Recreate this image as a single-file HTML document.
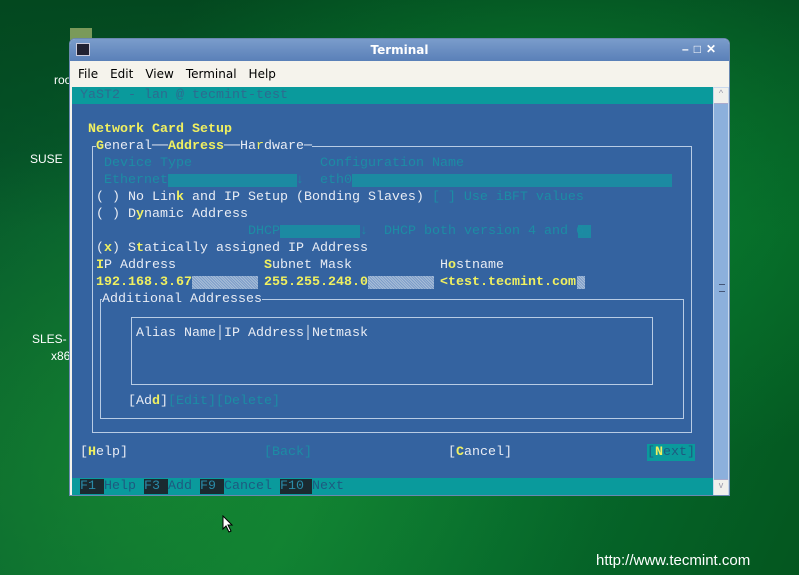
<!DOCTYPE html>
<html><head><meta charset="utf-8"><style>
*{margin:0;padding:0;box-sizing:border-box}
body{width:799px;height:575px;overflow:hidden;position:relative;font-family:"Liberation Sans",sans-serif;
background:linear-gradient(115deg,#05522a 0%,#0a6a30 30%,#0c7a32 50%,#066a2c 70%,#04561f 100%);}
.g1{position:absolute;left:0;top:0;width:799px;height:575px;background:radial-gradient(ellipse at 20% 80%,rgba(30,150,50,.5),rgba(0,0,0,0) 50%),radial-gradient(ellipse at 70% 30%,rgba(10,140,50,.6),rgba(0,0,0,0) 55%),linear-gradient(180deg,#03481f 0%,rgba(0,0,0,0) 40%)}
.dl{position:absolute;color:#fff;font-size:12px}
.win{position:absolute;left:69px;top:38px;width:661px;height:458px;background:#f5f3ec;border:1px solid #6a88b0;border-radius:6px 6px 0 0;overflow:hidden}
.title{position:absolute;left:0;top:0;width:100%;height:22px;background:linear-gradient(#7a9ccb,#5a80b8);color:#fff;font-weight:bold;font-size:12px;text-align:center;line-height:22px;font-family:"DejaVu Sans",sans-serif}
.menu{position:absolute;left:0;top:22px;height:26px;width:100%;font-size:12px;line-height:26px;color:#000;font-family:"DejaVu Sans",sans-serif}
.menu span{margin-left:8px;margin-right:4px}
.term{position:absolute;left:2px;top:48px;width:641px;height:409px;background:#3463a0;overflow:hidden;font-family:"Liberation Mono","DejaVu Sans Mono",monospace;font-size:13.33px;line-height:17px;color:#e8ecf4}
.in{position:absolute;left:8px;top:0;width:633px;height:409px}
.sb{position:absolute;left:643px;top:48px;width:16px;height:409px;background:#8cb0dc;border:1px solid #c8d8ec}
.t{position:absolute;white-space:pre}
.d{color:#1c8ca4}
.y{color:#f0f060;font-weight:bold}
.yy{color:#f0f060}
.f{position:absolute;background:repeating-linear-gradient(45deg,#a8bed8 0 1px,#7c9cc8 1px 2px)}
.fd{position:absolute;background:#1c8aa2}
.bx{position:absolute;border:1px solid #b8cce4}
</style></head><body>
<div class="g1"></div>
<div class="dl" style="left:54px;top:73px">roo</div>
<div class="dl" style="left:30px;top:152px">SUSE</div>
<div class="dl" style="left:32px;top:332px">SLES-</div>
<div class="dl" style="left:51px;top:349px">x86</div>
<div style="position:absolute;left:70px;top:28px;width:22px;height:12px;background:#7a9a5a"></div>
<div class="dl" style="left:596px;top:552px;font-size:15px">http://www.tecmint.com</div>
<svg style="position:absolute;left:222px;top:515px" width="12" height="18"><path d="M1 1L1 14L4 11L7 17L9 16L6 10L10 10Z" fill="#fff" stroke="#000"/></svg>
<div class="win">
<div class="title">Terminal</div>
<div style="position:absolute;left:6px;top:4px;width:14px;height:13px;background:#223;border:1px solid #ccd"></div>
<div style="position:absolute;right:8px;top:3px;color:#fff;font-size:12px;font-weight:bold;letter-spacing:5px">–□✕</div>
<div class="menu"><span>File</span><span>Edit</span><span>View</span><span>Terminal</span><span>Help</span></div>
<div class="term">
<div style="position:absolute;left:0;top:0;width:641px;height:17px;background:#0a9a9c"></div>
<div style="position:absolute;left:0;top:391px;width:641px;height:17px;background:#0a9a9c"></div>
<div class="in">
<div class="t" style="left:0;top:0;color:#2e6a90">YaST2 - lan @ tecmint-test</div>
<div class="t y" style="left:8px;top:34px">Network Card Setup</div>
<div class="bx" style="left:12px;top:59px;width:600px;height:287px"></div>
<div class="t" style="left:16px;top:51px;background:#3463a0"><span class="y">G</span>eneral──<span class="y">Address</span>──Ha<span class="yy">r</span>dware─</div>
<div class="t d" style="left:24px;top:68px">Device Type</div>
<div class="t d" style="left:240px;top:68px">Configuration Name</div>
<div class="fd" style="left:88px;top:87px;width:129px;height:13px"></div>
<div class="t d" style="left:24px;top:85px">Ethernet</div>
<div class="t d" style="left:216px;top:85px">↓</div>
<div class="fd" style="left:272px;top:87px;width:320px;height:13px"></div>
<div class="t d" style="left:240px;top:85px">eth0</div>
<div class="t" style="left:16px;top:102px">( ) No Lin<span class="y">k</span> and IP Setup (Bonding Slaves) <span class="d">[ ] Use iBFT values</span></div>
<div class="t" style="left:16px;top:119px">( ) D<span class="y">y</span>namic Address</div>
<div class="fd" style="left:200px;top:138px;width:80px;height:13px"></div>
<div class="t d" style="left:168px;top:136px">DHCP</div>
<div class="t d" style="left:280px;top:136px">↓</div>
<div class="fd" style="left:498px;top:138px;width:13px;height:13px"></div>
<div class="t d" style="left:304px;top:136px">DHCP both version 4 and 6↓</div>
<div class="t" style="left:16px;top:153px">(<span class="y">x</span>) S<span class="y">t</span>atically assigned IP Address</div>
<div class="t" style="left:16px;top:170px"><span class="y">I</span>P Address</div>
<div class="t" style="left:184px;top:170px"><span class="y">S</span>ubnet Mask</div>
<div class="t" style="left:360px;top:170px">H<span class="y">o</span>stname</div>
<div class="f" style="left:112px;top:189px;width:66px;height:13px"></div>
<div class="t y" style="left:16px;top:187px">192.168.3.67</div>
<div class="f" style="left:288px;top:189px;width:66px;height:13px"></div>
<div class="t y" style="left:184px;top:187px">255.255.248.0</div>
<div class="f" style="left:497px;top:189px;width:8px;height:13px"></div>
<div class="t y" style="left:360px;top:187px">&lt;test.tecmint.com</div>
<div class="bx" style="left:20px;top:212px;width:584px;height:120px"></div>
<div class="t" style="left:22px;top:204px;background:#3463a0">Additional Addresses</div>
<div class="bx" style="left:51px;top:230px;width:522px;height:68px"></div>
<div class="t" style="left:56px;top:238px">Alias Name│IP Address│Netmask</div>
<div class="t" style="left:48px;top:306px">[Ad<span class="y">d</span>]<span class="d">[Edit][Delete]</span></div>
<div class="t" style="left:0;top:357px">[<span class="y">H</span>elp]</div>
<div class="t d" style="left:184px;top:357px">[Back]</div>
<div class="t" style="left:368px;top:357px">[<span class="y">C</span>ancel]</div>
<div class="t" style="left:567px;top:357px;background:#0a9a9c;color:#1e5a80">[<span class="y">N</span>ext]</div>
<div class="t" style="left:0;top:391px;color:#1e5a80"><span style="background:#1a2a30;color:#2a8aa8">F1 </span>Help <span style="background:#1a2a30;color:#2a8aa8">F3 </span>Add <span style="background:#1a2a30;color:#2a8aa8">F9 </span>Cancel <span style="background:#1a2a30;color:#2a8aa8">F10 </span>Next</div>
</div>
</div>
<div class="sb"><div style="height:16px;background:#f0f0ec;border-bottom:1px solid #aac;font-size:9px;text-align:center;color:#99a">^</div><div style="position:absolute;left:5px;top:196px;width:6px;height:8px;border-top:1px solid #457;border-bottom:1px solid #457"></div><div style="position:absolute;bottom:0;width:14px;height:16px;background:#f0f0ec;border-top:1px solid #aac;font-size:9px;text-align:center;color:#99a">v</div></div>
</div>
</body></html>
